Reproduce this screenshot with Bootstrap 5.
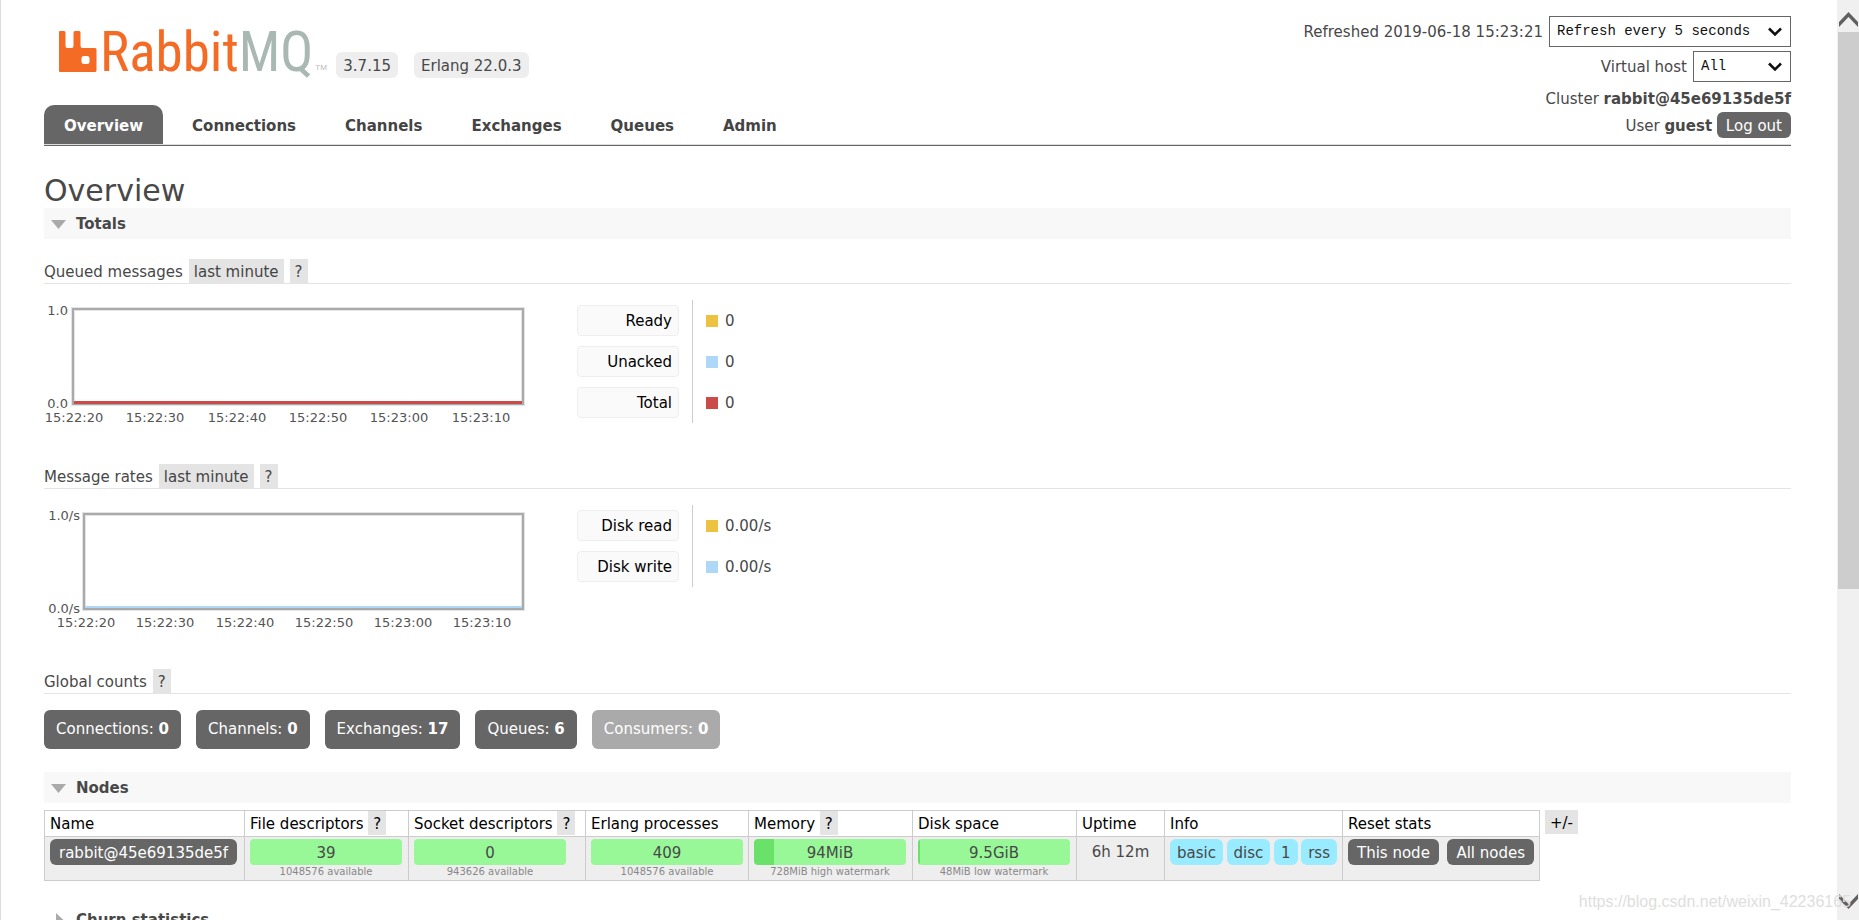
<!DOCTYPE html>
<html lang="en">
<head>
<meta charset="utf-8">
<meta name="viewport" content="width=device-width, initial-scale=1">
<title>RabbitMQ Management</title>
<link rel="stylesheet" href="https://cdn.jsdelivr.net/npm/bootstrap@5.3.0/dist/css/bootstrap.min.css">
<style>
body { font: 15px/24px Verdana, "DejaVu Sans", sans-serif; color: #484848; background: #fff; }
.viewport { height: 100vh; border-left: 1px solid #ddd; }
.page-body { padding: 0 46px 0 43px; min-width: 0; }
.top-bar { height: 146px; border-bottom: 1px solid #666; box-shadow: inset 0 -1px #ddd; }
.logo-row { padding: 28px 0 0 14px; height: 105px; }
.wordmark { font-family: "Liberation Sans Narrow", "Roboto Condensed", "Liberation Sans", sans-serif; font-size: 55px; line-height: 48px; color: #f36b25; padding-left: 3px; }
.wordmark span { color: #a9b8b3; }
.tm { font: 8px/10px "Liberation Sans", sans-serif; color: #bbb; margin-top: 35px; width: 23px; padding-left: 2px; }
.version { background: #eee; border-radius: 6px; padding: 2px 7px 0; height: 26px; margin: 24px 16px 0 0; }
.tabs .nav-link { color: #444; font-weight: bold; padding: 8px 20px 7px; margin-right: 9px; border-radius: 10px 10px 0 0; height: 39px; line-height: 26px; }
.tabs .nav-link.active { background: #666; color: #fff; }
.status { padding-top: 16px; }
.status select { font: 14px/20px "Liberation Mono", monospace; color: #111; height: 31px; border: 1px solid #666; border-radius: 0; padding: 4px 28px 6px 7px; margin-left: 6px; background: #fff url("data:image/svg+xml,%3Csvg xmlns='http://www.w3.org/2000/svg' viewBox='0 0 14 10'%3E%3Cpath d='M1 1.5l6 6 6-6' fill='none' stroke='%23111' stroke-width='2.6'/%3E%3C/svg%3E") no-repeat right 8px center/14px 10px; }
.w-refresh { width: 242px; }
.w-vhost { width: 98px; }
.who { line-height: 26px; }
.dark-btn { background: #666; color: #fff; border: 0; border-radius: 6px; font-size: 15px; line-height: 24px; padding: 2px 9px 0; text-decoration: none; display: inline-block; }
.dark-btn:hover { color: #fff; }
h1 { font-size: 30px; line-height: 34px; margin: 28px 0 0; }
.section-head { background: #f8f8f8; font-size: 15px; font-weight: bold; line-height: 29px; margin: 0; padding: 2px 0 0 7px; gap: 10px; }
.section-head.closed { background: none; margin-top: 23px; }
.block-head { font-size: 15px; line-height: 26px; height: 25px; font-weight: normal; margin: 0; border-bottom: 1px solid #e4e4e4; gap: 6px; }
.hint { background: #e4e4e4; color: #444; border: 0; padding: 2px 5px 0; height: 24px; line-height: 22px; font-size: 15px; }
.block-body { padding: 16px 0 35px; }
.chart { width: 490px; height: 129px; display: block; font-size: 13px; fill: #545454; }
.legend-keys { width: 102px; margin: 5px 13px 0 43px; gap: 10px; }
.legend-keys button { background: #fafafa; border: 1px solid #eee; border-radius: 4px; height: 31px; text-align: right; color: #000; padding: 0 6px; line-height: 24px; }
.legend-vals { border-left: 1px solid #ccc; padding: 5px 0 5px 13px; gap: 10px; align-self: flex-start; }
.legend-vals div { height: 31px; gap: 7px; }
.swatch { width: 12px; height: 12px; }
.yellow { background: #edc240; } .blue { background: #afd8f8; } .red { background: #cb4b4b; }
.counts { gap: 15px; padding: 16px 0 23px; }
.counts a { background: #666; color: #fff; border-radius: 6px; padding: 0 12px; line-height: 39px; text-decoration: none; }
.counts a.off { background: #aaa; }
.node-wrap { padding-top: 7px; gap: 5px; }
.nodes { table-layout: fixed; width: 1495px; border-collapse: collapse; }
.nodes th, .nodes td { border: 1px solid #ccc; white-space: nowrap; padding: 0 5px; }
.nodes th { font-weight: normal; color: #000; height: 26px; line-height: 24px; }
.nodes th .hint { color: #000; }
.nodes td { background: #eee; height: 44px; vertical-align: top; padding-top: 2px; line-height: 26px; }
.gauge { background: #98f898; border-radius: 4px; width: 152px; height: 26px; line-height: 28px; text-align: center; overflow: hidden; }
.gauge-sub { width: 152px; font-size: 10px; line-height: 14px; text-align: center; color: #888; }
.info-tag { background: #99ebff; border-radius: 6px; padding: 2px 7px 0; line-height: 24px; display: inline-block; }
.scroller { width: 22px; background: #f0f0f0; padding-left: 1px; }
.scroller svg { display: block; width: 21px; height: 32px; }
.thumb { height: calc(61vh - 4px); background: #cdcdcd; }
.watermark { position: absolute; right: 8px; bottom: 6px; font: 16px/24px "Liberation Sans", sans-serif; color: #dedede; }
</style>
</head>
<body>
<div class="viewport d-flex overflow-hidden position-relative">
<main class="page-body flex-grow-1">
  <header class="top-bar d-flex justify-content-between">
    <div>
      <div class="logo-row d-flex">
        <svg width="39" height="48" viewBox="0 0 39 48" role="img" aria-label="RabbitMQ"><path fill="#f36b25" fill-rule="evenodd" d="M2 3h4q1.500 0 1.500 1.500V18q0 2 2 2h4q2 0 2-2V4.500Q15.500 3 17 3h4q1.500 0 1.500 1.500V18q0 2 2 2H37q1.500 0 1.500 1.500v21q0 1.500-1.500 1.500H2q-1 0-1-1V4q0-1 1-1zM26 28q-2.500 0-2.500 2.500v3q0 2.500 2.500 2.500h3q2.500 0 2.500-2.500v-3q0-2.500-2.500-2.500z"/></svg>
        <div class="wordmark">Rabbit<span>MQ</span></div><div class="tm">TM</div>
        <div class="version">3.7.15</div>
        <div class="version">Erlang 22.0.3</div>
      </div>
      <nav class="nav tabs">
        <a class="nav-link active" href="#">Overview</a>
        <a class="nav-link" href="#">Connections</a>
        <a class="nav-link" href="#">Channels</a>
        <a class="nav-link" href="#">Exchanges</a>
        <a class="nav-link" href="#">Queues</a>
        <a class="nav-link" href="#">Admin</a>
      </nav>
    </div>
    <div class="status d-flex flex-column align-items-end">
      <div class="d-flex align-items-center"><label for="refresh">Refreshed 2019-06-18 15:23:21</label><select id="refresh" class="form-select w-refresh"><option>Refresh every 5 seconds</option></select></div>
      <div class="d-flex align-items-center mt-1"><label for="vhost">Virtual host</label><select id="vhost" class="form-select w-vhost"><option>All</option></select></div>
      <div class="mt-1 who">Cluster <b>rabbit@45e69135de5f</b></div>
      <div class="who">User <b>guest</b> <button class="dark-btn">Log out</button></div>
    </div>
  </header>

  <h1>Overview</h1>
  <h2 class="section-head d-flex align-items-center"><svg width="15" height="9"><path d="M0 0h15L7.500 9z" fill="#aaa"/></svg>Totals</h2>

  <section class="mt-3 pt-1">
    <h3 class="block-head d-flex">Queued messages <button class="hint">last minute</button><button class="hint">?</button></h3>
    <div class="block-body d-flex">
      <svg class="chart" viewBox="0 0 490 129">
        <rect x="29" y="9" width="450" height="95" fill="none" stroke="#e4e4e4" stroke-width="4"/>
        <rect x="29" y="9" width="450" height="95" fill="none" stroke="#aaa" stroke-width="2"/>
        <path d="M30 102.500h448" stroke="#cb4b4b" stroke-width="3"/>
        <g text-anchor="end"><text x="24" y="15">1.0</text><text x="24" y="108">0.0</text></g>
        <g text-anchor="middle"><text x="30" y="122">15:22:20</text><text x="111" y="122">15:22:30</text><text x="193" y="122">15:22:40</text><text x="274" y="122">15:22:50</text><text x="355" y="122">15:23:00</text><text x="437" y="122">15:23:10</text></g>
      </svg>
      <div class="legend-keys d-flex flex-column"><button>Ready</button><button>Unacked</button><button>Total</button></div>
      <div class="legend-vals d-flex flex-column">
        <div class="d-flex align-items-center"><i class="swatch yellow"></i>0</div>
        <div class="d-flex align-items-center"><i class="swatch blue"></i>0</div>
        <div class="d-flex align-items-center"><i class="swatch red"></i>0</div>
      </div>
    </div>
  </section>

  <section>
    <h3 class="block-head d-flex">Message rates <button class="hint">last minute</button><button class="hint">?</button></h3>
    <div class="block-body d-flex">
      <svg class="chart" viewBox="0 0 490 129">
        <rect x="40" y="9" width="439" height="95" fill="none" stroke="#e4e4e4" stroke-width="4"/>
        <rect x="40" y="9" width="439" height="95" fill="none" stroke="#aaa" stroke-width="2"/>
        <path d="M41 102h437" stroke="#afd8f8" stroke-width="2"/>
        <g text-anchor="end"><text x="36" y="15">1.0/s</text><text x="36" y="108">0.0/s</text></g>
        <g text-anchor="middle"><text x="42" y="122">15:22:20</text><text x="121" y="122">15:22:30</text><text x="201" y="122">15:22:40</text><text x="280" y="122">15:22:50</text><text x="359" y="122">15:23:00</text><text x="438" y="122">15:23:10</text></g>
      </svg>
      <div class="legend-keys d-flex flex-column"><button>Disk read</button><button>Disk write</button></div>
      <div class="legend-vals d-flex flex-column">
        <div class="d-flex align-items-center"><i class="swatch yellow"></i>0.00/s</div>
        <div class="d-flex align-items-center"><i class="swatch blue"></i>0.00/s</div>
      </div>
    </div>
  </section>

  <section>
    <h3 class="block-head d-flex">Global counts <button class="hint">?</button></h3>
    <div class="counts d-flex">
      <a href="#">Connections: <b>0</b></a><a href="#">Channels: <b>0</b></a><a href="#">Exchanges: <b>17</b></a><a href="#">Queues: <b>6</b></a><a href="#" class="off">Consumers: <b>0</b></a>
    </div>
  </section>

  <h2 class="section-head d-flex align-items-center"><svg width="15" height="9"><path d="M0 0h15L7.500 9z" fill="#aaa"/></svg>Nodes</h2>
  <div class="node-wrap d-flex align-items-start">
    <table class="nodes">
      <colgroup><col style="width:200px"><col style="width:164px"><col style="width:177px"><col style="width:163px"><col style="width:164px"><col style="width:164px"><col style="width:88px"><col style="width:178px"><col style="width:197px"></colgroup>
      <thead><tr><th>Name</th><th>File descriptors <button class="hint">?</button></th><th>Socket descriptors <button class="hint">?</button></th><th>Erlang processes</th><th>Memory <button class="hint">?</button></th><th>Disk space</th><th>Uptime</th><th>Info</th><th>Reset stats</th></tr></thead>
      <tbody><tr>
        <td><a class="dark-btn" href="#">rabbit@45e69135de5f</a></td>
        <td><div class="gauge">39</div><div class="gauge-sub">1048576 available</div></td>
        <td><div class="gauge">0</div><div class="gauge-sub">943626 available</div></td>
        <td><div class="gauge">409</div><div class="gauge-sub">1048576 available</div></td>
        <td><div class="gauge" style="background:linear-gradient(90deg,#6ae26a 13%,#98f898 13%)">94MiB</div><div class="gauge-sub">728MiB high watermark</div></td>
        <td><div class="gauge" style="background:linear-gradient(90deg,#6ae26a 1%,#98f898 1%)">9.5GiB</div><div class="gauge-sub">48MiB low watermark</div></td>
        <td class="text-center">6h 12m</td>
        <td><div class="d-flex justify-content-between"><span class="info-tag">basic</span><span class="info-tag">disc</span><span class="info-tag">1</span><span class="info-tag">rss</span></div></td>
        <td><div class="d-flex justify-content-between"><button class="dark-btn">This node</button><button class="dark-btn">All nodes</button></div></td>
      </tr></tbody>
    </table>
    <button class="hint text-black">+/-</button>
  </div>
  <h2 class="section-head closed d-flex align-items-center"><svg width="15" height="15"><path d="M5 0v15l8-7.500z" fill="#aaa"/></svg>Churn statistics</h2>
</main>
<div class="scroller d-flex flex-column flex-shrink-0" aria-hidden="true">
  <svg viewBox="0 0 21 32"><path d="M1 22v5l9.500-10L20 27v-5L10.500 12z" fill="#606060"/></svg>
  <div class="thumb"></div>
  <svg class="mt-auto" viewBox="0 0 21 32"><path d="M1 6v5l9.500 10L20 11V6l-9.500 10z" fill="#606060"/></svg>
</div>
<div class="watermark">https://blog.csdn.net/weixin_42236165</div>
</div>
<script src="https://cdn.jsdelivr.net/npm/bootstrap@5.3.0/dist/js/bootstrap.bundle.min.js"></script>
</body>
</html>
